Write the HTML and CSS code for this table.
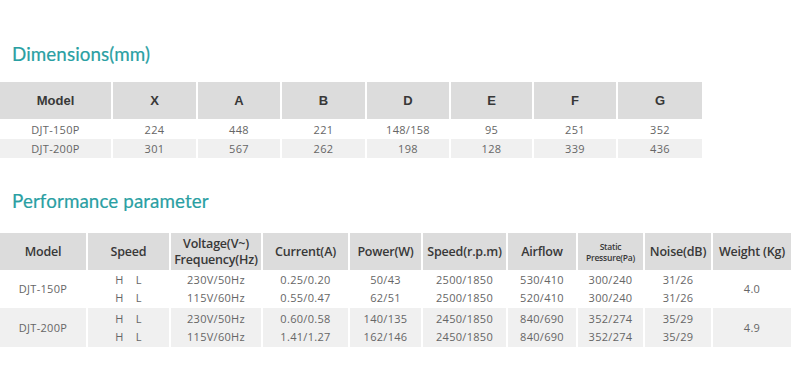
FILE: index.html
```html
<!DOCTYPE html>
<html>
<head>
<meta charset="utf-8">
<link rel="stylesheet" href="styles.css">
</head>
<body>
<section class="block block-dim">
  <h2 class="title">Dimensions(mm)</h2>
  <table class="spec dim">
    <colgroup>
      <col style="width:112px"><col style="width:85px"><col style="width:84px"><col style="width:85px"><col style="width:84px"><col style="width:83px"><col style="width:84px"><col style="width:85px">
    </colgroup>
    <thead>
      <tr><th>Model</th><th>X</th><th>A</th><th>B</th><th>D</th><th>E</th><th>F</th><th>G</th></tr>
    </thead>
    <tbody>
      <tr><td>DJT-150P</td><td>224</td><td>448</td><td>221</td><td>148/158</td><td>95</td><td>251</td><td>352</td></tr>
      <tr class="alt"><td>DJT-200P</td><td>301</td><td>567</td><td>262</td><td>198</td><td>128</td><td>339</td><td>436</td></tr>
    </tbody>
  </table>
</section>

<section class="block block-perf">
  <h2 class="title">Performance parameter</h2>
  <table class="spec perf">
    <colgroup>
      <col style="width:87px"><col style="width:83px"><col style="width:92px"><col style="width:87px"><col style="width:73px"><col style="width:85px"><col style="width:70px"><col style="width:67px"><col style="width:68px"><col style="width:79px">
    </colgroup>
    <thead>
      <tr>
        <th>Model</th><th>Speed</th><th class="two">Voltage(V~)<br>Frequency(Hz)</th><th>Current(A)</th><th>Power(W)</th><th>Speed(r.p.m)</th><th>Airflow</th><th class="small">Static<br>Pressure(Pa)</th><th>Noise(dB)</th><th>Weight (Kg)</th>
      </tr>
    </thead>
    <tbody>
      <tr>
        <td>DJT-150P</td>
        <td><div class="hl"><span>H</span><span>L</span></div><div class="hl"><span>H</span><span>L</span></div></td>
        <td><div>230V/50Hz</div><div>115V/60Hz</div></td>
        <td><div>0.25/0.20</div><div>0.55/0.47</div></td>
        <td><div>50/43</div><div>62/51</div></td>
        <td><div>2500/1850</div><div>2500/1850</div></td>
        <td><div>530/410</div><div>520/410</div></td>
        <td><div>300/240</div><div>300/240</div></td>
        <td><div>31/26</div><div>31/26</div></td>
        <td>4.0</td>
      </tr>
      <tr class="alt">
        <td>DJT-200P</td>
        <td><div class="hl"><span>H</span><span>L</span></div><div class="hl"><span>H</span><span>L</span></div></td>
        <td><div>230V/50Hz</div><div>115V/60Hz</div></td>
        <td><div>0.60/0.58</div><div>1.41/1.27</div></td>
        <td><div>140/135</div><div>162/146</div></td>
        <td><div>2450/1850</div><div>2450/1850</div></td>
        <td><div>840/690</div><div>840/690</div></td>
        <td><div>352/274</div><div>352/274</div></td>
        <td><div>35/29</div><div>35/29</div></td>
        <td>4.9</td>
      </tr>
    </tbody>
  </table>
</section>
</body>
</html>
```

FILE: styles.css
```css
html, body {
  margin: 0;
  padding: 0;
  background: #ffffff;
}

body {
  font-family: "Open Sans", "Noto Sans", sans-serif;
  color: #666;
}

.block-dim {
  padding-top: 40px;
}

.block-perf {
  padding-top: 29px;
}

.title {
  margin: 0 0 14px 12px;
  font-family: Lato, "Open Sans", sans-serif;
  font-weight: 400;
  font-size: 18.8px;
  line-height: 28px;
  color: #2a9fa3;
  letter-spacing: 0.1px;
  -webkit-text-stroke: 0.2px #2a9fa3;
}

.block-perf .title {
  margin-bottom: 18px;
}

.spec {
  border-collapse: collapse;
  table-layout: fixed;
}

.spec th,
.spec td {
  padding: 0;
  text-align: center;
  vertical-align: middle;
  border-left: 2px solid #fff;
  border-right: 2px solid #fff;
}

.spec th:first-child,
.spec td:first-child {
  border-left: none;
}

.spec th:last-child,
.spec td:last-child {
  border-right: none;
}

.spec thead th {
  background: #dcdcdc;
  color: #383838;
}

.spec td {
  font-size: 11px;
  color: #666;
  letter-spacing: 0.3px;
}

.spec tr.alt td {
  background: #f0f0f0;
}

/* Dimensions table */
.dim {
  width: 702px;
}

.dim thead th {
  height: 37px;
  font-family: "Liberation Sans", Arial, sans-serif;
  font-weight: 700;
  font-size: 13px;
}

.dim tbody td {
  height: 19px;
  line-height: 19px;
}

.dim tbody tr:first-child td {
  height: 20px;
}

/* Performance table */
.perf {
  width: 791px;
}

.perf thead th {
  height: 37px;
  font-family: "Open Sans", "Noto Sans", sans-serif;
  font-weight: 600;
  font-size: 12.5px;
  line-height: 15px;
  letter-spacing: -0.2px;
}

.perf thead th.two {
  font-size: 12.5px;
  line-height: 16px;
}

.perf thead th.small {
  font-size: 8.5px;
  line-height: 11px;
  letter-spacing: -0.2px;
}

.perf tbody td {
  height: 38px;
  line-height: 18px;
}

.perf tbody tr.alt td {
  height: 39px;
}

.hl {
  display: flex;
  justify-content: center;
  gap: 12px;
}
```
